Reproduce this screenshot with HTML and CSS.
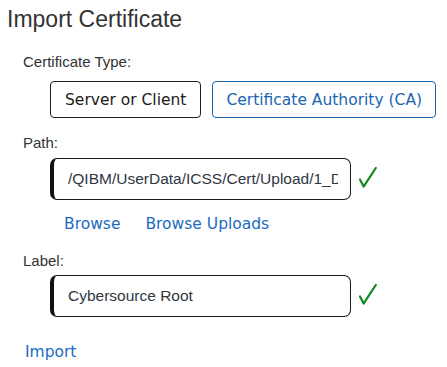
FILE: index.html
```html
<!DOCTYPE html>
<html>
<head>
<meta charset="utf-8">
<link rel="stylesheet" href="styles.css">
</head>
<body>
<div class="page">
  <h1 class="title">Import Certificate</h1>
  <div class="form">
    <div class="label label-type">Certificate Type:</div>
    <div class="indent buttons">
      <button class="btn btn-selected">Server or Client</button>
      <button class="btn btn-blue">Certificate Authority (CA)</button>
    </div>
    <div class="label label-path">Path:</div>
    <div class="indent field">
      <input class="input" type="text" readonly value="/QIBM/UserData/ICSS/Cert/Upload/1_DigiCertGlobalRootCA.crt">
      <svg class="check" width="18" height="21" viewBox="0 0 18 21"><path d="M1 12.5 L4.6 19.6 L16.8 1" fill="none" stroke="#138a1e" stroke-width="2.2" stroke-linecap="round" stroke-linejoin="round"/></svg>
    </div>
    <div class="indent links">
      <a class="link" href="#">Browse</a>
      <a class="link" href="#">Browse Uploads</a>
    </div>
    <div class="label label-label">Label:</div>
    <div class="indent field field-label">
      <input class="input" type="text" readonly value="Cybersource Root">
      <svg class="check" width="18" height="21" viewBox="0 0 18 21"><path d="M1 12.5 L4.6 19.6 L16.8 1" fill="none" stroke="#138a1e" stroke-width="2.2" stroke-linecap="round" stroke-linejoin="round"/></svg>
    </div>
    <a class="link import" href="#">Import</a>
  </div>
</div>
</body>
</html>
```
FILE: styles.css
```css
html, body {
  margin: 0;
  padding: 0;
  background: #ffffff;
}
.page {
  width: 447px;
  height: 367px;
  overflow: hidden;
  font-family: "Liberation Sans", Arial, sans-serif;
  color: #333333;
}
.title {
  margin: 5px 0 0 7px;
  font-size: 23px;
  line-height: 28px;
  font-weight: normal;
  color: #333333;
}
.form {
  padding-left: 23px;
  display: flex;
  flex-direction: column;
  align-items: flex-start;
}
.label {
  font-size: 15px;
  line-height: 18px;
  color: #333333;
}
.label-type { margin-top: 20px; }
.label-path { margin-top: 16px; }
.label-label { margin-top: 18px; }
.indent { margin-left: 27px; }
.buttons {
  display: flex;
  gap: 11px;
  margin-top: 10px;
}
.btn {
  height: 37px;
  padding: 0 14px;
  background: #ffffff;
  border: 1px solid #1f1f1f;
  border-radius: 4px;
  font-family: "DejaVu Sans", Verdana, sans-serif;
  font-size: 15.5px;
  color: #1a1a1a;
  cursor: pointer;
}
.btn-blue {
  padding: 0 13px;
  border-color: #1b66b1;
  color: #1b66b1;
}
.field {
  display: flex;
  align-items: center;
  gap: 8px;
  margin-top: 6px;
}
.field-label { margin-top: 5px; }
.input {
  box-sizing: border-box;
  width: 301px;
  height: 42px;
  margin: 0;
  padding: 0 12px 0 14px;
  border: 1.5px solid #1a1a1a;
  border-left: 4px solid #111111;
  border-radius: 7px;
  font-family: "Liberation Sans", Arial, sans-serif;
  font-size: 15.5px;
  color: #2f3742;
  background: #ffffff;
  outline: none;
}
.check {
  display: block;
  margin-top: -3px;
}
.links {
  display: flex;
  gap: 25px;
  margin-top: 14px;
  padding-left: 14px;
}
.link {
  font-family: "DejaVu Sans", Verdana, sans-serif;
  font-size: 15.5px;
  line-height: 20px;
  color: #1b6cc0;
  text-decoration: none;
}
.import {
  margin-top: 25px;
  margin-left: 2px;
}
```
